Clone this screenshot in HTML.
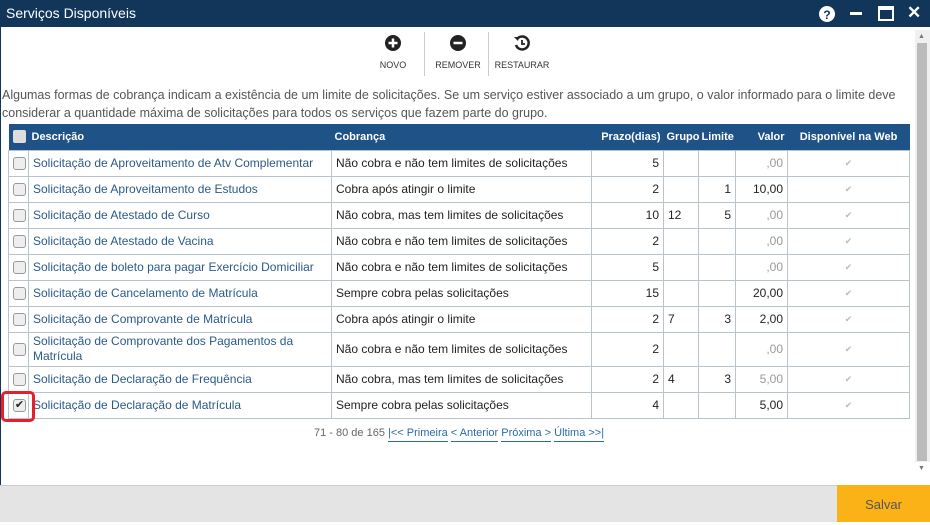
<!DOCTYPE html><html><head><meta charset="utf-8"><style>
*{box-sizing:border-box;margin:0;padding:0}
body{width:930px;height:522px;overflow:hidden;background:#fff;font-family:"Liberation Sans",sans-serif;position:relative}
.title{position:absolute;left:0;top:0;width:930px;height:27px;background:#12355a;color:#fff;font-size:14px;line-height:27px;padding-left:6px}
.lb{position:absolute;left:0;top:27px;width:1px;height:458px;background:#12355a}
.tb{position:absolute;top:34px;text-align:center;font-size:9px;color:#333}
.sep{position:absolute;top:32px;width:1px;height:44px;background:#ccc}
.ic{display:block;margin:0 auto 8px;width:18px;height:18px}
.info{position:absolute;left:2px;top:86px;font-size:12.5px;line-height:18px;color:#555;width:912px}
table{position:absolute;left:8px;top:124px;width:901px;border-collapse:collapse;font-size:12px;table-layout:fixed}
th{background:#1f5286;color:#fff;font-weight:bold;font-size:11px;height:26px;text-align:left;padding:0 3px}
td{border:1px solid #b8c4cc;height:26px;padding:0 4px;color:#222}
td.l{color:#2a5a8a}
.r{text-align:right}
.g{color:#999}
.cb{display:inline-block;width:13px;height:13px;border:1px solid #999;border-radius:3px;background:#eee;vertical-align:middle}
.hcb{display:inline-block;width:13px;height:13px;border-radius:2px;background:#ddd;vertical-align:middle}
.w{text-align:center;color:#bbb;font-size:9px}
.pg{position:absolute;left:314px;top:427px;font-size:11px;color:#666}
.pg a{color:#2a6aa8;text-decoration:none;border-bottom:1px solid #2a6aa8;padding-bottom:2px}
.sb{position:absolute;left:915px;top:30px;width:15px;height:432px;background:#f0f0f0}
.th{position:absolute;left:917px;top:43px;width:10px;height:418px;background:#bbb}
.ft{position:absolute;left:0;top:485px;width:930px;height:37px;background:#e4e4e4;border-top:1px solid #ccc}
.sv{position:absolute;left:837px;top:485px;width:93px;height:37px;background:#fbb216;color:#555;font-size:13px;text-align:center;line-height:40px}
.red{position:absolute;left:1px;top:391px;width:34px;height:31px;border:3px solid #e4202a;border-radius:5px}
</style></head><body>
<div class="title">Serviços Disponíveis</div>
<svg style="position:absolute;left:819px;top:6px" width="16" height="16"><circle cx="8" cy="8" r="8" fill="#fff"/><text x="8" y="13" font-size="12" font-weight="bold" text-anchor="middle" fill="#12355a" font-family="Liberation Sans">?</text></svg>
<div style="position:absolute;left:850px;top:12px;width:12px;height:3px;background:#fff"></div>
<div style="position:absolute;left:878px;top:6px;width:16px;height:15px;border:2px solid #fff;border-top-width:4px"></div>
<div style="position:absolute;left:907px;top:3px;color:#fff;font-size:17px;font-weight:bold">✕</div>
<div class="lb"></div>
<div class="tb" style="left:378px;width:30px"><svg class="ic" viewBox="0 0 18 18"><circle cx="9" cy="9" r="8" fill="#222"/><path d="M9 4.5v9M4.5 9h9" stroke="#fff" stroke-width="2.5"/></svg>NOVO</div>
<div class="sep" style="left:424px"></div>
<div class="tb" style="left:433px;width:50px"><svg class="ic" viewBox="0 0 18 18"><circle cx="9" cy="9" r="8" fill="#222"/><path d="M4.5 9h9" stroke="#fff" stroke-width="2.5"/></svg>REMOVER</div>
<div class="sep" style="left:488px"></div>
<div class="tb" style="left:494px;width:56px"><svg class="ic" viewBox="0 0 18 18"><path d="M4 5A6.5 6.5 0 1 1 3 11" fill="none" stroke="#222" stroke-width="2.5"/><path d="M1 3l5 0-1 4z" fill="#222"/><path d="M9 6v4h3" fill="none" stroke="#222" stroke-width="1.8"/></svg>RESTAURAR</div>
<div class="info">Algumas formas de cobrança indicam a existência de um limite de solicitações. Se um serviço estiver associado a um grupo, o valor informado para o limite deve considerar a quantidade máxima de solicitações para todos os serviços que fazem parte do grupo.</div>
<table>
<colgroup><col style="width:20px"><col style="width:303px"><col style="width:260px"><col style="width:72px"><col style="width:35px"><col style="width:37px"><col style="width:52px"><col style="width:122px"></colgroup>
<tr><th style="padding-left:4px"><span class="hcb"></span></th><th>Descrição</th><th>Cobrança</th><th class="r">Prazo(dias)</th><th>Grupo</th><th>Limite</th><th class="r">Valor</th><th style="text-align:center">Disponível na Web</th></tr>
<tr><td><span class="cb"></span></td><td class="l">Solicitação de Aproveitamento de Atv Complementar</td><td>Não cobra e não tem limites de solicitações</td><td class="r">5</td><td></td><td></td><td class="r g">,00</td><td class="w">✔</td></tr>
<tr><td><span class="cb"></span></td><td class="l">Solicitação de Aproveitamento de Estudos</td><td>Cobra após atingir o limite</td><td class="r">2</td><td></td><td class="r">1</td><td class="r">10,00</td><td class="w">✔</td></tr>
<tr><td><span class="cb"></span></td><td class="l">Solicitação de Atestado de Curso</td><td>Não cobra, mas tem limites de solicitações</td><td class="r">10</td><td>12</td><td class="r">5</td><td class="r g">,00</td><td class="w">✔</td></tr>
<tr><td><span class="cb"></span></td><td class="l">Solicitação de Atestado de Vacina</td><td>Não cobra e não tem limites de solicitações</td><td class="r">2</td><td></td><td></td><td class="r g">,00</td><td class="w">✔</td></tr>
<tr><td><span class="cb"></span></td><td class="l">Solicitação de boleto para pagar Exercício Domiciliar</td><td>Não cobra e não tem limites de solicitações</td><td class="r">5</td><td></td><td></td><td class="r g">,00</td><td class="w">✔</td></tr>
<tr><td><span class="cb"></span></td><td class="l">Solicitação de Cancelamento de Matrícula</td><td>Sempre cobra pelas solicitações</td><td class="r">15</td><td></td><td></td><td class="r">20,00</td><td class="w">✔</td></tr>
<tr><td><span class="cb"></span></td><td class="l">Solicitação de Comprovante de Matrícula</td><td>Cobra após atingir o limite</td><td class="r">2</td><td>7</td><td class="r">3</td><td class="r">2,00</td><td class="w">✔</td></tr>
<tr><td style="height:34px"><span class="cb"></span></td><td class="l" style="line-height:15px">Solicitação de Comprovante dos Pagamentos da Matrícula</td><td>Não cobra e não tem limites de solicitações</td><td class="r">2</td><td></td><td></td><td class="r g">,00</td><td class="w">✔</td></tr>
<tr><td><span class="cb"></span></td><td class="l">Solicitação de Declaração de Frequência</td><td>Não cobra, mas tem limites de solicitações</td><td class="r">2</td><td>4</td><td class="r">3</td><td class="r g">5,00</td><td class="w">✔</td></tr>
<tr><td><span class="cb" style="font-size:11px;line-height:11px;text-align:center;color:#222">✔</span></td><td class="l">Solicitação de Declaração de Matrícula</td><td>Sempre cobra pelas solicitações</td><td class="r">4</td><td></td><td></td><td class="r">5,00</td><td class="w">✔</td></tr>
</table>
<div class="red"></div>
<div class="pg">71 - 80 de 165 <a>|&lt;&lt; Primeira</a> <a>&lt; Anterior</a> <a>Próxima &gt;</a> <a>Última &gt;&gt;|</a></div>
<div class="sb"></div><div class="th"></div>
<div style="position:absolute;left:918px;top:33px;font-size:7px;color:#777">▲</div>
<div style="position:absolute;left:918px;top:465px;font-size:7px;color:#777">▼</div>
<div class="ft"></div><div class="sv">Salvar</div>
</body></html>
